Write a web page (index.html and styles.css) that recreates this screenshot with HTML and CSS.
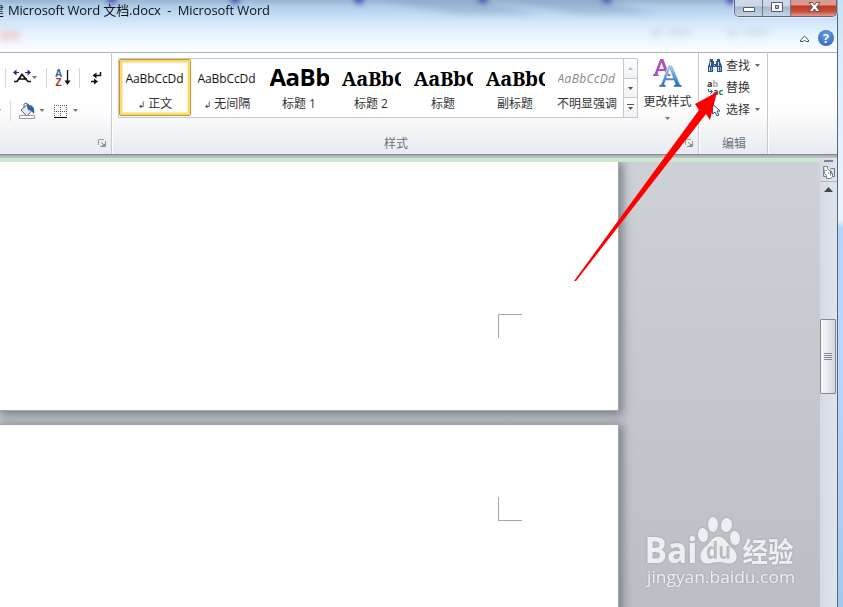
FILE: index.html
```html
<!DOCTYPE html>
<html lang="zh-CN">
<head>
<meta charset="utf-8">
<title>Microsoft Word</title>
<link rel="stylesheet" href="styles.css">
</head>
<body>
<div class="desktop">
<div class="window">
  <header class="titlebar">
    <svg class="glass" width="837" height="52" viewBox="0 0 837 52">
      <defs><filter id="soft" x="-50%" y="-200%" width="200%" height="500%"><feGaussianBlur stdDeviation="3"/></filter></defs>
      <g filter="url(#soft)">
        <path d="M0-3h837v4H0z" fill="#637a98" opacity=".5"/>
        <path d="M370 0h110l60 14h-80zM490 0h110l60 14h-80z" fill="#7795b6" opacity=".4"/>
        <path d="M0 31h20v9H0z" fill="#f3b9bd" opacity=".6"/>
        <path d="M108-5h8v8h-8zM231-5h8v8h-8zM355-5h8v8h-8zM479-5h8v8h-8zM603-5h8v8h-8zM727-5h8v8h-8z" fill="#2627ac"/>
        <path d="M651 30h11v7h-11zM668 30h22v6h-22zM727 30h11v7h-11zM744 30h24v6h-24z" fill="#99a5b3" opacity=".25"/>
      </g>
    </svg>
    <div class="title-text"><span class="first">建</span><span>Microsoft Word 文档.docx&nbsp; -&nbsp; Microsoft Word</span></div>
    <div class="controls">
      <div class="caption">
        <span class="cap"><svg width="14" height="16"><path d="M1.500 7.500h11v4h-11z" fill="#fff" stroke="#555b69"/></svg></span>
        <span class="cap"><svg width="14" height="16"><path d="M1.500 2.500h11v9h-11zM5.500 5.500h3v3h-3z" fill="#fff" fill-rule="evenodd" stroke="#50586b"/></svg></span>
        <span class="cap close"><svg width="14" height="16"><path d="M2 2.500h3.500l2 2.500 2-2.500H13L9.500 7l3.500 4.500H9.500l-2-2.500-2 2.500H2L5.500 7z" fill="#fff" stroke="#575668"/></svg></span>
      </div>
      <div class="help-row">
        <svg width="11" height="9"><path d="M1.500 6 5.500 2.200 9.500 6v1.500H7L5.500 6 4 7.500H1.500z" fill="#fff" stroke="#444b56"/></svg>
        <span class="help">?</span>
      </div>
    </div>
  </header>

  <section class="ribbon">
    <div class="group paragraph">
      <svg width="111" height="78" viewBox="0 53 111 78">
        <path d="M5.500 68v20M46.500 68v20M79.500 68v20M10.500 101v20" stroke="#d3d6db"/>
        <path d="M14 81.500h3l5-7 6 7h3M18 79h9" stroke="#111" stroke-width="1.700" fill="none"/>
        <path d="M14 72.500h5M25 72.500h5" stroke="#2322a0" fill="none"/><path d="M13 72.500l3.500-3v6zM31 72.500l-3.500-3v6z" fill="#2322a0"/>
        <path d="M32 76h5l-2.500 3zM39.500 109h5l-2.500 3zM73 109h5l-2.500 3zM-3 109h4l-2 3z" fill="#777"/>
        <text x="55" y="76.500" class="sort a">A</text><text x="55.500" y="85.500" class="sort z">Z</text>
        <path d="M67.500 70v12" stroke="#111" stroke-width="1.300"/><path d="M64.500 80.500h6L67.500 85z" fill="#111"/>
        <path d="M100.500 72v3.500H95M91 81.500h5" stroke="#111" stroke-width="1.500" fill="none"/><path d="M96.500 72.500v6l-4-3zM94 78.500v6l4-3z" fill="#111"/>
        <path d="m21 110 7-6 5 5-6 7z" fill="#e5edf6" stroke="#596b83"/><path d="M24 108v-4l3-1 1 6" fill="none" stroke="#596b83"/><path d="M28 105c5 0 7 3 6 9-2-2-3-4-6-4z" fill="#315fa4"/>
        <path d="M19.500 115.500h15v3h-15z" fill="#fff" stroke="#999"/>
        <path d="M54.500 105v12M60.500 105v12M66.500 105v12M54 105.500h13M54 111.500h13" stroke="#555" stroke-dasharray="1 1"/>
        <path d="M54 117.500h13" stroke="#000"/>
      </svg>
      <div class="group-foot"><svg class="launcher" width="8" height="8"><path d="M.5 6V.5H6" fill="none" stroke="#999da4"/><path d="M3 3l3 3M7.500 2v5.500H2M4 6.500h3M5.500 5.500H7" stroke="#8d9198" fill="none"/></svg></div>
    </div>

    <div class="group styles">
      <div class="styles-row">
        <div class="gallery">
          <div class="style selected"><span class="sample">AaBbCcDd</span><span class="name"><i>↲</i> 正文</span></div>
          <div class="style"><span class="sample">AaBbCcDd</span><span class="name"><i>↲</i> 无间隔</span></div>
          <div class="style"><span class="sample h1">AaBb</span><span class="name">标题 1</span></div>
          <div class="style"><span class="sample h2">AaBbC</span><span class="name">标题 2</span></div>
          <div class="style"><span class="sample h2">AaBbC</span><span class="name">标题</span></div>
          <div class="style"><span class="sample h2">AaBbC</span><span class="name">副标题</span></div>
          <div class="style"><span class="sample subtle">AaBbCcDd</span><span class="name">不明显强调</span></div>
          <div class="scroller">
            <span class="off"><svg width="7" height="5"><path d="M1 4h5L3.500 1z" fill="#b8bbc0"/></svg></span>
            <span><svg width="7" height="5"><path d="M1 1h5L3.500 4z" fill="#555"/></svg></span>
            <span><svg width="7" height="7"><path d="M0 .5h7" stroke="#555"/><path d="M1 3h5L3.500 6z" fill="#555"/></svg></span>
          </div>
        </div>
        <div class="change">
          <svg width="32" height="32" viewBox="0 0 32 32">
            <defs>
              <linearGradient id="blue" x2="0" y2="1"><stop stop-color="#a9cef1"/><stop offset="1" stop-color="#2465b5"/></linearGradient>
            </defs>
            <path d="M1 18v-1.500l1.500-.5L8.300 1h3L17 16l1.500.5V18h-6v-1.500l1.200-.5-1-3H6.500l-1 3 1.200.5V18zM7.200 11h4.700L9.500 4.500z" fill="#a952b7"/>
            <path d="M7 29v-1.800l2-.6L16.500 7h3.600L28 26.600l2 .6V29h-8.500v-1.800l1.800-.6-1.500-4.100h-8l-1.500 4.100 1.700.6V29zM14.600 20h6.300l-3.200-8.500z" fill="url(#blue)" stroke="#fff" stroke-width=".5"/>
          </svg>
          <span>更改样式</span>
          <svg width="5" height="4"><path d="M0 0h5L2.500 3z" fill="#777"/></svg>
        </div>
      </div>
      <div class="group-foot"><span>样式</span><svg class="launcher" width="8" height="8"><path d="M.5 6V.5H6" fill="none" stroke="#999da4"/><path d="M3 3l3 3M7.500 2v5.500H2M4 6.500h3M5.500 5.500H7" stroke="#8d9198" fill="none"/></svg></div>
    </div>

    <div class="group edit">
      <div class="commands">
        <div class="command">
          <svg width="16" height="16"><path d="M3 1h3v2h1v3h2V3h1V1h3v2l1 3 1 2v6h-5V9H6v5H1V8l1-2z" fill="#2f5489"/><path d="M3.500 4v4M11.500 4v4M2.500 9v4M11.500 9v4M7.500 7v1" stroke="#c5dbef"/><path d="M4.500 9v4M13.500 9v4" stroke="#7fa3cf"/></svg>
          <span>查找</span><svg class="drop" width="5" height="4"><path d="M0 0h5L2.500 3z" fill="#666"/></svg>
        </div>
        <div class="command">
          <svg width="16" height="16"><text x="0" y="7" class="ab">a<tspan fill="#aaa">b</tspan></text><text x="6" y="15" class="ab">a<tspan fill="#118331">c</tspan></text><path d="M1.500 9v2.500H5M3.500 9.500l2 2-2 2" fill="none" stroke="#31639e"/></svg>
          <span>替换</span>
        </div>
        <div class="command">
          <svg width="16" height="16"><path d="M5.500 2v10l2.500-2 2 4 2-1-2-4h3z" fill="#fff" stroke="#3f566f"/></svg>
          <span>选择</span><svg class="drop" width="5" height="4"><path d="M0 0h5L2.500 3z" fill="#666"/></svg>
        </div>
      </div>
      <div class="group-foot"><span>编辑</span></div>
    </div>
  </section>

  <div class="edge"></div>
  <main class="workspace">
    <div class="canvas">
      <div class="ruler"></div>
      <div class="pages">
        <div class="page one"><span class="crop"></span></div>
        <div class="page two"><span class="crop bottom"></span></div>
      </div>
      <div class="watermark">
        <svg width="156" height="76" viewBox="0 0 156 76">
          <g fill="#edeff1">
            <text x="-1.500" y="48" textLength="53" lengthAdjust="spacingAndGlyphs" class="bai">Bai</text>
            <ellipse cx="57" cy="20" rx="5" ry="7" transform="rotate(-8 57 20)"/><ellipse cx="67" cy="9.500" rx="5" ry="7.500"/><ellipse cx="80.500" cy="10" rx="5.500" ry="7" transform="rotate(12 80.500 10)"/><ellipse cx="89" cy="23" rx="5" ry="7" transform="rotate(-8 89 23)"/>
            <path d="M72.500 21.500c7 0 8 7 14 12 8 7 4 16-5 15-6-2-12-2-18 0-10 1-12-9-5-16 6-4 7-11 14-11z"/>
            <text x="96.500" y="46.500" class="jing" textLength="51" lengthAdjust="spacingAndGlyphs">经验</text>
            <text x="1" y="68" class="url" textLength="148" lengthAdjust="spacingAndGlyphs">jingyan.baidu.com</text>
          </g>
          <text x="60" y="44" class="du" textLength="25" lengthAdjust="spacingAndGlyphs">du</text>
        </svg>
      </div>
    </div>
    <aside class="scrollbar">
      <span class="split"></span>
      <svg class="view" width="14" height="13"><path d="M4.500 10.500h-3v-8h3M8.500 2.500h4v8H9" fill="none" stroke="#777d86"/><path d="M2.500.5h4v2l2 2h1v3h2v3l-2 2h-4v-3l-2-2z" fill="#f9fafb" stroke="#777d86" transform="translate(-1)"/><path d="M4 4v1M6 7h1M8 9h1M9 5v2" stroke="#444"/></svg>
      <span class="rule"></span>
      <svg class="up" width="9" height="5"><path d="M0 5h9L4.500 0z" fill="#454545"/></svg>
      <span class="thumb"><i></i><i></i><i></i><i></i></span>
    </aside>
  </main>
</div>
<svg class="arrow" width="843" height="607"><path d="M574 281 699 110l-4-6 22-12-7 28-4-6L576 281z" fill="#f00"/></svg>
</div>
</body>
</html>
```
FILE: styles.css
```css
* { box-sizing: border-box; }
body { margin: 0; font: 12px/16px "Open Sans", "Noto Sans CJK SC", sans-serif; color: #333; }
svg { display: block; flex: none; }
.desktop { position: relative; width: 843px; height: 607px; overflow: hidden; background: linear-gradient(#c9e1f7 0, #dcecfc 60px, #eaf4ff 220px, #b3d6fa 228px, #b7d9fc 350px, #a2c9ed 607px); }
.window { width: 838px; height: 607px; border-right: 1px solid #55657c; display: flex; flex-direction: column; }
.titlebar { position: relative; height: 52px; flex: none; display: flex; justify-content: space-between; background: linear-gradient(#a8c6e4 0, #b8d4ef 10px, #d3e6fa 22px, #e9f4ff 35px, #fbfdff 52px); }
.glass { position: absolute; left: 0; top: 0; }
.title-text { position: relative; display: flex; gap: 4px; margin-left: -9px; padding-top: 2px; font-size: 13px; line-height: 17px; color: #111; white-space: nowrap; letter-spacing: -.12px; }
.controls { position: relative; width: 103px; }
.caption { display: flex; width: 103px; height: 17px; border: 1px solid #59697d; border-top: 0; border-radius: 0 0 5px 5px; overflow: hidden; box-shadow: 0 0 0 1px #ffffff70; }
.cap { width: 28px; height: 16px; display: flex; justify-content: center; border-right: 1px solid #697c91; background: linear-gradient(#ccd8e5 0 6px, #a5b8cc 7px, #c5d5e5); }
.cap.close { flex: 1; border: 0; background: linear-gradient(#dc9a8e 0 5px, #bc3924 6px, #c74a35 11px, #e49b88); }
.help-row { display: flex; align-items: center; justify-content: flex-end; gap: 8px; height: 16px; margin-top: 13px; padding-right: 3px; }
.help { width: 16px; height: 16px; border-radius: 50%; background: radial-gradient(circle at 50% 30%, #659ce2, #2c64b5); color: #fff; font-weight: 700; font-size: 13px; line-height: 16px; text-align: center; }
.ribbon { height: 103px; flex: none; display: flex; border-top: 1px solid #aeb4bd; border-bottom: 1px solid #858a92; background: linear-gradient(#fff 0, #fefefe 55px, #f4f5f7 76px, #e7eaef 101px); }
.group { display: flex; flex-direction: column; border-right: 1px solid #c5c9d0; box-shadow: 1px 0 #fff; }
.paragraph { width: 112px; }
.styles { width: 587px; }
.edit { width: 69px; }
.group-foot { position: relative; height: 22px; margin-top: auto; display: flex; justify-content: center; color: #68727f; line-height: 24px; }
.styles .group-foot { padding-right: 18px; }
.edit .group-foot { padding-left: 2px; }
.launcher { position: absolute; right: 5px; top: 7px; }
.sort { font: 700 10px "Liberation Sans", sans-serif; }
.sort.a { fill: #305d9d; }
.sort.z { fill: #9b3430; }
.styles-row { display: flex; padding: 5px 0 0 6px; }
.gallery { display: flex; width: 520px; height: 60px; border: 1px solid #c5c9ce; background: #fff; }
.style { width: 72px; flex: none; display: flex; flex-direction: column; align-items: center; padding-top: 8px; white-space: nowrap; }
.style.selected { height: 57px; padding-top: 5px; border: 1px solid #c69435; border-radius: 2px; box-shadow: inset 0 0 0 2px #ffda6b, inset 0 0 0 3px #ffedb0; }
.selected .sample { margin-top: 2px; }
.sample { width: 59px; height: 25px; overflow: hidden; color: #111; font-size: 12px; line-height: 23px; letter-spacing: -.1px; }
.sample.h1 { font: 700 24px/19px "Open Sans", sans-serif; letter-spacing: -.5px; color: #000; }
.sample.h2 { font: 700 20px/24px "Noto Serif", "DejaVu Serif", "Liberation Serif", serif; letter-spacing: -.3px; color: #000; }
.sample.subtle { font-style: italic; color: #888; letter-spacing: .35px; }
.name { height: 18px; line-height: 24px; color: #333; }
.name i { font: 9px "DejaVu Sans", sans-serif; }
.scroller { width: 15px; margin-left: auto; margin-right: -1px; border-left: 1px solid #c5c9ce; border-right: 1px solid #c5c9ce; display: flex; flex-direction: column; }
.scroller span { flex: 1; display: flex; align-items: center; justify-content: center; border-bottom: 1px solid #c5c9ce; background: linear-gradient(#fff, #f0f2f5); }
.scroller span:last-child { border: 0; }
.change { flex: 1; display: flex; flex-direction: column; align-items: center; padding-right: 1px; }
.change span { margin: 4px 0 7px; line-height: 16px; }
.commands { padding: 2px 0 0 8px; }
.command { height: 22px; display: flex; align-items: center; gap: 3px; }
.command .drop { margin-left: 2px; }
.ab { font: 700 9px "Open Sans", sans-serif; fill: #333; }
.edge { height: 3px; flex: none; background: linear-gradient(#a5a8ad, #c3c6cb); }
.workspace { flex: 1; min-height: 0; display: flex; }
.canvas { position: relative; width: 820px; overflow: hidden; background: linear-gradient(#ced1d6, #bbbfc5); }
.ruler { position: relative; height: 4px; background: #cde6cf; }
.pages { display: flex; flex-direction: column; gap: 13px; height: 445px; }
.page { width: 619px; display: flex; justify-content: flex-end; background: #fff; border: solid #a1a7b0; border-width: 0 1px 1px 0; box-shadow: 2px 2px 9px 2px #7b8087; }
.one { height: 249px; flex: none; padding: 152px 96px 0 0; clip-path: inset(0 -20px -13px 0); }
.two { height: 190px; flex: none; padding: 72px 96px 0 0; border-top-width: 1px; }
.crop { width: 24px; height: 24px; border: solid #a6a6a6; border-width: 1px 0 0 1px; }
.crop.bottom { border-width: 0 0 1px 1px; }
.watermark { position: absolute; left: 646px; top: 357px; filter: drop-shadow(0 0 1px #999da3); }
.watermark svg { overflow: visible; }
.bai { font: 700 35px "Open Sans", sans-serif; }
.du { font: 700 23px "Open Sans", sans-serif; fill: #b9bdc3; }
.jing { font: 700 27px "Noto Sans CJK SC", sans-serif; }
.url { font: 16px "Open Sans", sans-serif; }
.scrollbar { width: 17px; display: flex; flex-direction: column; align-items: center; background: linear-gradient(90deg, #d6dae2, #dfe3ec); }
.split { width: 9px; height: 2px; margin-top: 2px; background: #7c8087; }
.view { margin-top: 4px; }
.rule { width: 17px; height: 1px; margin-top: 2px; background: #b4bac5; }
.up { margin-top: 5px; }
.thumb { width: 16px; height: 75px; margin: 127px 1px 0 0; padding: 33px 3px 0; display: flex; flex-direction: column; gap: 1px; border: 1px solid #83878e; border-radius: 1px; background: linear-gradient(90deg, #f8f9fa, #d2d6de); }
.thumb i { height: 1px; background: #858990; }
.arrow { position: absolute; left: 0; top: 0; pointer-events: none; }
```
